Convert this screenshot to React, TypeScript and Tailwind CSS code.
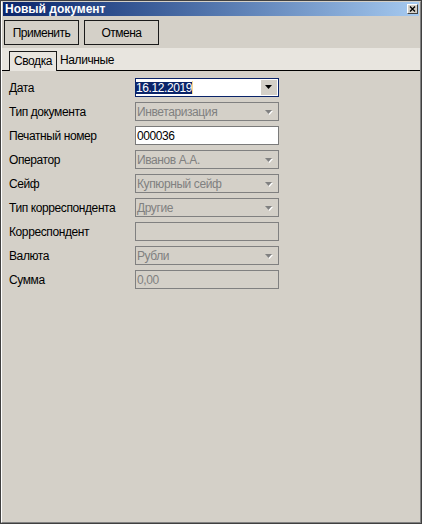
import React from 'react';

type Kind = 'date' | 'select' | 'input' | 'disabled';

const rows: { label: string; kind: Kind; value: string }[] = [
  { label: 'Дата', kind: 'date', value: '16.12.2019' },
  { label: 'Тип документа', kind: 'select', value: 'Инветаризация' },
  { label: 'Печатный номер', kind: 'input', value: '000036' },
  { label: 'Оператор', kind: 'select', value: 'Иванов А.А.' },
  { label: 'Сейф', kind: 'select', value: 'Купюрный сейф' },
  { label: 'Тип корреспондента', kind: 'select', value: 'Другие' },
  { label: 'Корреспондент', kind: 'disabled', value: '' },
  { label: 'Валюта', kind: 'select', value: 'Рубли' },
  { label: 'Сумма', kind: 'disabled', value: '0,00' },
];

function Arrow({ disabled }: { disabled?: boolean }) {
  return (
    <svg width="9" height="6" viewBox="0 0 9 6">
      {disabled && <polygon points="1,1 8,1 4.5,5" fill="#ffffff" />}
      <polygon points="0,0 7,0 3.5,4" fill={disabled ? '#808080' : '#000000'} />
    </svg>
  );
}

function Field({ kind, value }: { kind: Kind; value: string }) {
  if (kind === 'date') {
    return (
      <div className="w-[144px] h-[19px] border border-[#0a246a] bg-white flex items-center">
        <div className="flex-1 flex items-center h-full">
          <span className="bg-[#0a246a] text-white h-[12px] flex items-center leading-none">{value}</span>
          <span className="w-px h-[13px] bg-[#f5db95]" />
        </div>
        <div className="w-[16px] h-[15px] mr-px bg-[#d4d0c8] flex items-center justify-center pt-px pl-px">
          <Arrow />
        </div>
      </div>
    );
  }
  if (kind === 'input') {
    return (
      <div className="w-[144px] h-[19px] border border-[#7a7a7a] bg-white flex items-center pl-px text-black">
        {value}
      </div>
    );
  }
  return (
    <div className="w-[144px] h-[19px] border border-[#808080] flex items-center pl-px text-[#808080]">
      <span className="flex-1">{value}</span>
      {kind === 'select' && (
        <div className="w-[16px] flex items-center justify-center pt-[2px] pl-px mr-px">
          <Arrow disabled />
        </div>
      )}
    </div>
  );
}

export default function App() {
  return (
    <div
      className="w-[422px] h-[524px] bg-[#d4d0c8] border border-[#404040] text-[12px] tracking-[-0.4px] text-black"
      style={{ fontFamily: '"Liberation Sans", Arial, sans-serif' }}
    >
      <div className="h-full flex flex-col border border-t-[#d4d0c8] border-l-[#ffffff] border-r-[#808080] border-b-[#808080]">
        {/* title bar */}
        <div className="h-[14px] mx-px flex items-center justify-between bg-gradient-to-r from-[#0a246a] to-[#a6caf0]">
          <span className="pl-[2px] text-white font-bold text-[12px] tracking-normal leading-none">Новый документ</span>
          <div className="w-[11px] h-[10px] mr-px bg-[#d4d0c8] border border-t-white border-l-white border-r-[#404040] border-b-[#404040] flex items-center justify-center">
            <svg width="7" height="6" viewBox="0 0 7 6">
              <path d="M1 0.5 L6 5.5 M6 0.5 L1 5.5" stroke="#000" strokeWidth="1.3" />
            </svg>
          </div>
        </div>

        {/* toolbar */}
        <div className="h-[32px] flex items-start gap-[5px] pt-[4px] pl-[2px]">
          <button className="w-[75px] h-[25px] border border-[#1a1a1a] bg-[#d4d0c8] flex items-center justify-center tracking-[-0.5px]">
            Применить
          </button>
          <button className="w-[75px] h-[25px] border border-[#1a1a1a] bg-[#d4d0c8] flex items-center justify-center tracking-[-0.5px]">
            Отмена
          </button>
        </div>

        {/* tabs */}
        <div className="h-[23px] bg-[#e8e5df] flex items-end border-b border-black pl-[7px]">
          <div className="h-[20px] w-[48px] border border-b-0 border-[#1a1a1a] bg-[#e8e5df] flex items-center justify-center -mb-px pb-px">
            Сводка
          </div>
          <div className="h-[20px] pl-[3px] flex items-center">Наличные</div>
        </div>

        {/* form */}
        <div className="flex flex-col gap-[5px] pt-[7px] pl-[7px]">
          {rows.map((r) => (
            <div key={r.label} className="h-[19px] flex items-center">
              <div className="w-[126px]">{r.label}</div>
              <Field kind={r.kind} value={r.value} />
            </div>
          ))}
        </div>
      </div>
    </div>
  );
}
